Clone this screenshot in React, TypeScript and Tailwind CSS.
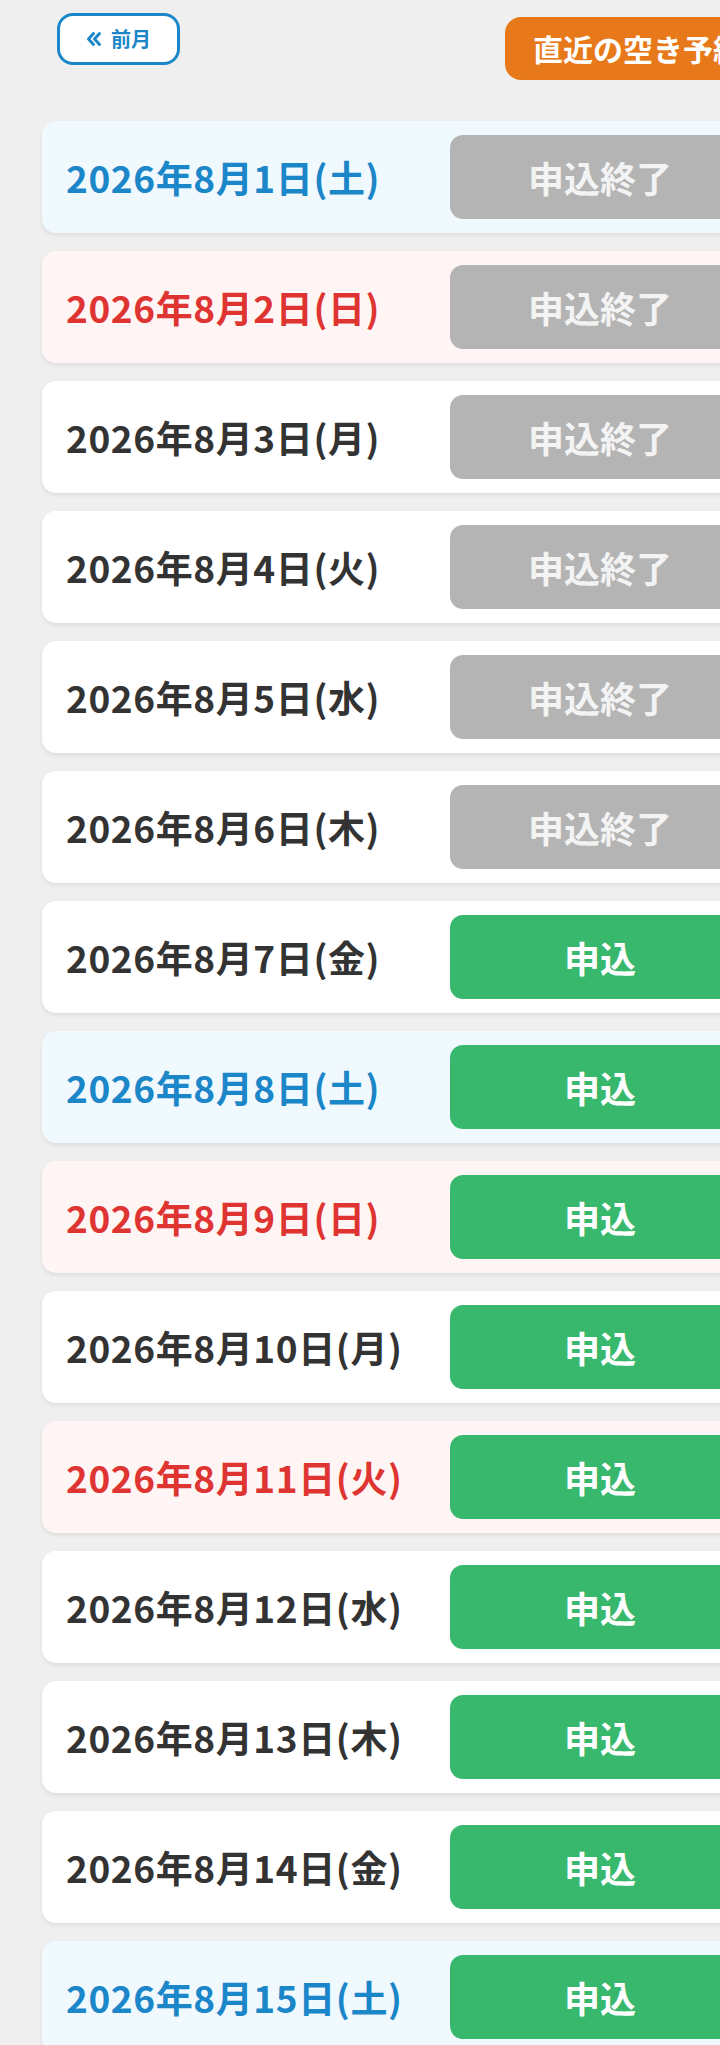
import React from "react";

type Kind = "sat" | "sun" | "week";
type Row = { day: number; wd: string; kind: Kind; closed: boolean };

const rows: Row[] = [
  { day: 1, wd: "土", kind: "sat", closed: true },
  { day: 2, wd: "日", kind: "sun", closed: true },
  { day: 3, wd: "月", kind: "week", closed: true },
  { day: 4, wd: "火", kind: "week", closed: true },
  { day: 5, wd: "水", kind: "week", closed: true },
  { day: 6, wd: "木", kind: "week", closed: true },
  { day: 7, wd: "金", kind: "week", closed: false },
  { day: 8, wd: "土", kind: "sat", closed: false },
  { day: 9, wd: "日", kind: "sun", closed: false },
  { day: 10, wd: "月", kind: "week", closed: false },
  { day: 11, wd: "火", kind: "sun", closed: false },
  { day: 12, wd: "水", kind: "week", closed: false },
  { day: 13, wd: "木", kind: "week", closed: false },
  { day: 14, wd: "金", kind: "week", closed: false },
  { day: 15, wd: "土", kind: "sat", closed: false },
];

const font = { fontFamily: '"Noto Sans CJK JP", "Noto Sans", sans-serif' };

function Card({ r }: { r: Row }) {
  const bg =
    r.kind === "sat" ? "bg-[#f0f9fd]" : r.kind === "sun" ? "bg-[#fff5f5]" : "bg-white";
  const color =
    r.kind === "sat" ? "text-[#1b86c8]" : r.kind === "sun" ? "text-[#de3533]" : "text-[#333333]";
  return (
    <div
      className={`flex h-[112px] items-center rounded-[14px] ${bg} pl-[24px] shadow-[0_2px_4px_rgba(0,0,0,0.08)]`}
    >
      <div className={`w-[384px] shrink-0 text-[37px] font-bold leading-none tracking-[0.6px] ${color}`}>
        2026年8月{r.day}日({r.wd})
      </div>
      {r.closed ? (
        <div className="flex h-[84px] w-[300px] shrink-0 items-center justify-center rounded-[13px] bg-[#b4b4b4] text-[36px] font-bold text-[#f3f3f3]">
          申込終了
        </div>
      ) : (
        <div className="flex h-[84px] w-[300px] shrink-0 items-center justify-center rounded-[13px] bg-[#38b86d] text-[36px] font-bold text-white">
          申込
        </div>
      )}
    </div>
  );
}

export default function App() {
  return (
    <div className="h-[2045px] w-[720px] overflow-hidden bg-[#efefef]" style={font}>
      <div className="w-[900px] px-[42px]">
        <div className="flex items-start gap-[325px] pt-[13px]">
          <button className="ml-[15px] flex h-[52px] w-[123px] shrink-0 items-center justify-center gap-[9px] rounded-[16px] border-[3px] border-[#1b86c8] bg-white text-[20px] font-bold text-[#1b86c8]">
            <svg width="16" height="16" viewBox="0 0 16 16" fill="none" stroke="#1b86c8" strokeWidth="3" strokeLinecap="round" strokeLinejoin="round">
              <path d="M7.5 2.5 L2.5 8 L7.5 13.5" />
              <path d="M13.5 2.5 L8.5 8 L13.5 13.5" />
            </svg>
            <span className="leading-none">前月</span>
          </button>
          <button className="mt-[4px] flex h-[63px] w-[320px] shrink-0 items-center rounded-[16px] bg-[#e8791b] pl-[28px] text-[30px] font-bold text-white">
            直近の空き予約日
          </button>
        </div>
        <div className="mt-[41px] flex flex-col gap-[18px]">
          {rows.map((r) => (
            <Card key={r.day} r={r} />
          ))}
        </div>
      </div>
    </div>
  );
}
